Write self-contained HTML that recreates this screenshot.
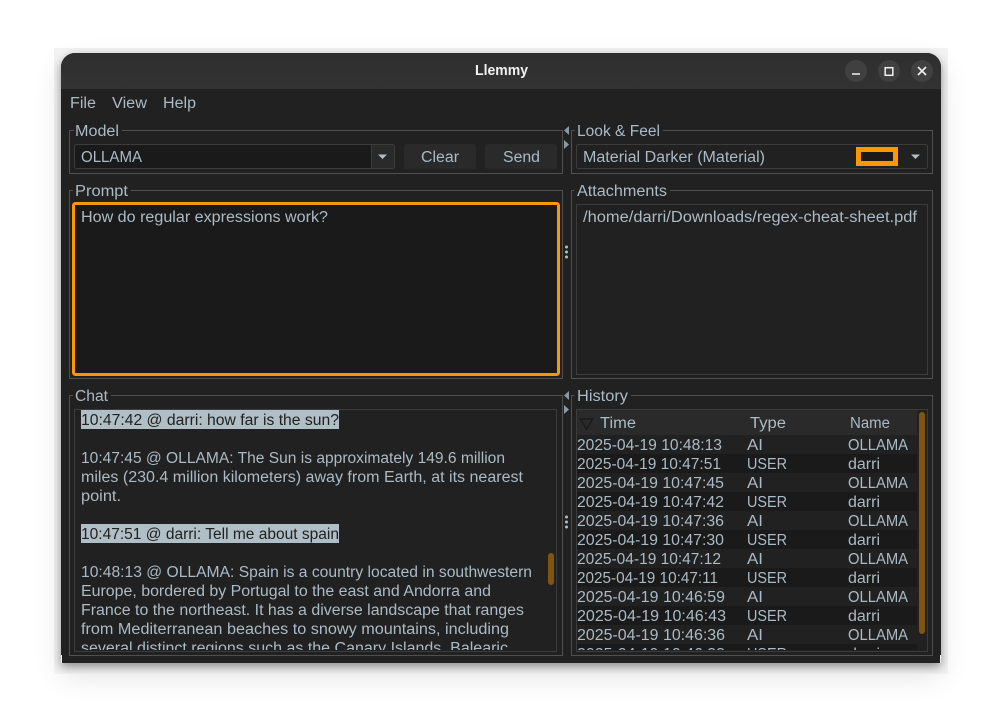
<!DOCTYPE html>
<html><head><meta charset="utf-8"><title>Llemmy</title>
<style>
html,body{margin:0;padding:0;background:#fff;width:1002px;height:722px;overflow:hidden}
#far{position:absolute;left:61px;top:53px;width:880px;height:610px;border-radius:14px 14px 0 0;box-shadow:0 12px 30px rgba(0,0,0,.12)}
#clip{position:absolute;left:54px;top:48px;width:894px;height:626px;overflow:hidden;background:#f2f2f2}
#win{position:absolute;left:7px;top:5px;width:880px;height:610px;border-radius:14px 14px 0 0;box-shadow:0 4px 10px rgba(0,0,0,.42)}
svg{position:absolute;left:0;top:0}
text{font-family:"Liberation Sans",sans-serif;font-size:15.5px;fill:#aabbc6}
</style></head><body>
<div id="far"></div>
<div id="clip"><div id="win"></div></div>
<svg width="1002" height="722" viewBox="0 0 1002 722" xmlns="http://www.w3.org/2000/svg">
<defs>
<linearGradient id="tb" x1="0" y1="0" x2="0" y2="1"><stop offset="0" stop-color="#2e2e2e"/><stop offset="1" stop-color="#333"/></linearGradient>
<clipPath id="cc"><rect x="75" y="410" width="481" height="240"/></clipPath>
<clipPath id="hc"><rect x="577" y="410" width="340" height="240"/></clipPath>
</defs>
<!-- window -->
<path d="M61 655V67a14 14 0 0 1 14-14H927a14 14 0 0 1 14 14V655H940V663H62V655Z" fill="#212121"/>
<path d="M61 89V67a14 14 0 0 1 14-14H927a14 14 0 0 1 14 14V89Z" fill="url(#tb)"/>
<text x="475" y="75" textLength="53" lengthAdjust="spacingAndGlyphs" style="font-weight:700;fill:#f2f2f2;font-size:14.5px">Llemmy</text>
<circle cx="856" cy="71" r="11" fill="#404040"/><circle cx="889" cy="71" r="11" fill="#404040"/><circle cx="922" cy="71" r="11" fill="#404040"/>
<path d="M852 74H860" stroke="#f0f0f0" stroke-width="1.5"/>
<rect x="885.2" y="67.7" width="7.6" height="7.6" fill="none" stroke="#f0f0f0" stroke-width="1.5"/>
<path d="M918 67L926 75M926 67L918 75" stroke="#f0f0f0" stroke-width="1.6"/>
<!-- menu -->
<text x="70" y="108" textLength="26" lengthAdjust="spacingAndGlyphs">File</text><text x="112" y="108" textLength="35" lengthAdjust="spacingAndGlyphs">View</text><text x="163" y="108" textLength="33" lengthAdjust="spacingAndGlyphs">Help</text>
<!-- group borders -->
<g fill="none" stroke="#505050">
<path d="M74 130.5H69.5V173.5H562.5V130.5H122"/>
<path d="M574.5 130.5H571.5V173.5H932.5V130.5H663"/>
<path d="M73 190.5H69.5V378.5H562.5V190.5H131"/>
<path d="M574.5 190.5H571.5V378.5H932.5V190.5H670"/>
<path d="M73 395.5H69.5V655.5H562.5V395.5H111"/>
<path d="M574.5 395.5H571.5V655.5H932.5V395.5H631"/>
</g>
<text x="75" y="136" textLength="44" lengthAdjust="spacingAndGlyphs">Model</text>
<text x="577" y="136" textLength="83" lengthAdjust="spacingAndGlyphs">Look &amp; Feel</text>
<text x="75" y="196" textLength="53" lengthAdjust="spacingAndGlyphs">Prompt</text>
<text x="577" y="196" textLength="90" lengthAdjust="spacingAndGlyphs">Attachments</text>
<text x="75" y="401" textLength="33" lengthAdjust="spacingAndGlyphs">Chat</text>
<text x="577" y="401" textLength="51" lengthAdjust="spacingAndGlyphs">History</text>
<!-- model combo -->
<rect x="74.5" y="144.5" width="320" height="24" rx="2" fill="#1a1a1a" stroke="#3c3c3c"/>
<rect x="372" y="145" width="22" height="23" fill="#2a2a2a"/><path d="M371.5 145V168" stroke="#3c3c3c"/>
<path d="M378 154.5H387L382.5 159Z" fill="#b0bec5"/>
<text x="81" y="162" textLength="61" lengthAdjust="spacingAndGlyphs">OLLAMA</text>
<rect x="404" y="144" width="72" height="25" rx="3" fill="#2a2a2a"/>
<rect x="485" y="144" width="72" height="25" rx="3" fill="#2a2a2a"/>
<text x="421" y="162" textLength="38" lengthAdjust="spacingAndGlyphs">Clear</text><text x="503" y="162" textLength="37" lengthAdjust="spacingAndGlyphs">Send</text>
<!-- laf combo -->
<rect x="576.5" y="144.5" width="351" height="24" rx="2" fill="#212121" stroke="#3c3c3c"/>
<text x="583" y="162" textLength="182" lengthAdjust="spacingAndGlyphs">Material Darker (Material)</text>
<rect x="858.5" y="149.5" width="37" height="14" fill="#1a1a1a" stroke="#ff9800" stroke-width="5"/>
<path d="M911 154.5H920L915.5 159Z" fill="#b0bec5"/>
<!-- prompt -->
<rect x="73.5" y="203.5" width="485" height="171" rx="2" fill="#1a1a1a" stroke="#ff9800" stroke-width="3"/>
<text x="81" y="222" textLength="247" lengthAdjust="spacingAndGlyphs">How do regular expressions work?</text>
<!-- attachments -->
<rect x="576.5" y="204.5" width="351" height="170" fill="#212121" stroke="#3c3c3c"/>
<text x="583" y="222" textLength="334" lengthAdjust="spacingAndGlyphs">/home/darri/Downloads/regex-cheat-sheet.pdf</text>
<!-- chat -->
<rect x="74.5" y="409.5" width="482" height="242" fill="#212121" stroke="#3c3c3c"/>
<rect x="81" y="410" width="258" height="19" fill="#b0bec5"/>
<rect x="81" y="524" width="258" height="19" fill="#b0bec5"/>
<g clip-path="url(#cc)">
<text x="81" y="425" textLength="258" lengthAdjust="spacingAndGlyphs" style="fill:#212121">10:47:42 @ darri: how far is the sun?</text>
<text x="81" y="463" textLength="424" lengthAdjust="spacingAndGlyphs">10:47:45 @ OLLAMA: The Sun is approximately 149.6 million</text>
<text x="81" y="482" textLength="442" lengthAdjust="spacingAndGlyphs">miles (230.4 million kilometers) away from Earth, at its nearest</text>
<text x="81" y="501" textLength="40" lengthAdjust="spacingAndGlyphs">point.</text>
<text x="81" y="539" textLength="258" lengthAdjust="spacingAndGlyphs" style="fill:#212121">10:47:51 @ darri: Tell me about spain</text>
<text x="81" y="577" textLength="451" lengthAdjust="spacingAndGlyphs">10:48:13 @ OLLAMA: Spain is a country located in southwestern</text>
<text x="81" y="596" textLength="410" lengthAdjust="spacingAndGlyphs">Europe, bordered by Portugal to the east and Andorra and</text>
<text x="81" y="615" textLength="443" lengthAdjust="spacingAndGlyphs">France to the northeast. It has a diverse landscape that ranges</text>
<text x="81" y="634" textLength="428" lengthAdjust="spacingAndGlyphs">from Mediterranean beaches to snowy mountains, including</text>
<text x="81" y="653" textLength="427" lengthAdjust="spacingAndGlyphs">several distinct regions such as the Canary Islands, Balearic</text>
</g>
<rect x="548" y="553" width="6" height="32" rx="3" fill="#7f5510"/>
<!-- history -->
<rect x="576.5" y="409.5" width="351" height="242" fill="#212121" stroke="#3c3c3c"/>
<rect x="577" y="410" width="340" height="25" fill="#2a2a2a"/>
<path d="M580.5 419H592.5L586.5 429.5Z" fill="none" stroke="#171717" stroke-width="1.2"/>
<text x="600" y="428" textLength="36" lengthAdjust="spacingAndGlyphs">Time</text><text x="750" y="428" textLength="36" lengthAdjust="spacingAndGlyphs">Type</text><text x="850" y="428" textLength="40" lengthAdjust="spacingAndGlyphs">Name</text>
<g fill="#1a1a1a">
<rect x="577" y="454" width="340" height="19"/><rect x="577" y="492" width="340" height="19"/><rect x="577" y="530" width="340" height="19"/><rect x="577" y="568" width="340" height="19"/><rect x="577" y="606" width="340" height="19"/><rect x="577" y="644" width="340" height="6"/>
</g>
<g clip-path="url(#hc)">
<text x="577" y="450" textLength="145" lengthAdjust="spacingAndGlyphs">2025-04-19 10:48:13</text><text x="747" y="450" textLength="16" lengthAdjust="spacingAndGlyphs">AI</text><text x="848" y="450" textLength="60" lengthAdjust="spacingAndGlyphs">OLLAMA</text>
<text x="577" y="469" textLength="144" lengthAdjust="spacingAndGlyphs">2025-04-19 10:47:51</text><text x="747" y="469" textLength="40" lengthAdjust="spacingAndGlyphs">USER</text><text x="848" y="469" textLength="32" lengthAdjust="spacingAndGlyphs">darri</text>
<text x="577" y="488" textLength="147" lengthAdjust="spacingAndGlyphs">2025-04-19 10:47:45</text><text x="747" y="488" textLength="16" lengthAdjust="spacingAndGlyphs">AI</text><text x="848" y="488" textLength="60" lengthAdjust="spacingAndGlyphs">OLLAMA</text>
<text x="577" y="507" textLength="147" lengthAdjust="spacingAndGlyphs">2025-04-19 10:47:42</text><text x="747" y="507" textLength="40" lengthAdjust="spacingAndGlyphs">USER</text><text x="848" y="507" textLength="32" lengthAdjust="spacingAndGlyphs">darri</text>
<text x="577" y="526" textLength="147" lengthAdjust="spacingAndGlyphs">2025-04-19 10:47:36</text><text x="747" y="526" textLength="16" lengthAdjust="spacingAndGlyphs">AI</text><text x="848" y="526" textLength="60" lengthAdjust="spacingAndGlyphs">OLLAMA</text>
<text x="577" y="545" textLength="147" lengthAdjust="spacingAndGlyphs">2025-04-19 10:47:30</text><text x="747" y="545" textLength="40" lengthAdjust="spacingAndGlyphs">USER</text><text x="848" y="545" textLength="32" lengthAdjust="spacingAndGlyphs">darri</text>
<text x="577" y="564" textLength="144" lengthAdjust="spacingAndGlyphs">2025-04-19 10:47:12</text><text x="747" y="564" textLength="16" lengthAdjust="spacingAndGlyphs">AI</text><text x="848" y="564" textLength="60" lengthAdjust="spacingAndGlyphs">OLLAMA</text>
<text x="577" y="583" textLength="141" lengthAdjust="spacingAndGlyphs">2025-04-19 10:47:11</text><text x="747" y="583" textLength="40" lengthAdjust="spacingAndGlyphs">USER</text><text x="848" y="583" textLength="32" lengthAdjust="spacingAndGlyphs">darri</text>
<text x="577" y="602" textLength="148" lengthAdjust="spacingAndGlyphs">2025-04-19 10:46:59</text><text x="747" y="602" textLength="16" lengthAdjust="spacingAndGlyphs">AI</text><text x="848" y="602" textLength="60" lengthAdjust="spacingAndGlyphs">OLLAMA</text>
<text x="577" y="621" textLength="149" lengthAdjust="spacingAndGlyphs">2025-04-19 10:46:43</text><text x="747" y="621" textLength="40" lengthAdjust="spacingAndGlyphs">USER</text><text x="848" y="621" textLength="32" lengthAdjust="spacingAndGlyphs">darri</text>
<text x="577" y="640" textLength="148" lengthAdjust="spacingAndGlyphs">2025-04-19 10:46:36</text><text x="747" y="640" textLength="16" lengthAdjust="spacingAndGlyphs">AI</text><text x="848" y="640" textLength="60" lengthAdjust="spacingAndGlyphs">OLLAMA</text>
<text x="577" y="659" textLength="148" lengthAdjust="spacingAndGlyphs">2025-04-19 10:46:33</text><text x="747" y="659" textLength="40" lengthAdjust="spacingAndGlyphs">USER</text><text x="848" y="659" textLength="32" lengthAdjust="spacingAndGlyphs">darri</text>
</g>
<rect x="919" y="412" width="6" height="222" rx="3" fill="#7f5510"/>
<!-- splitters -->
<g fill="#8a9aa3">
<path d="M569 126V135L564 130.5Z"/><path d="M564 140V149L569 144.5Z"/>
<path d="M569 391V400L564 395.5Z"/><path d="M564 405V414L569 409.5Z"/>
</g>
<g fill="#b0bec5">
<circle cx="566.5" cy="247" r="1.5"/><circle cx="566.5" cy="252" r="1.5"/><circle cx="566.5" cy="257" r="1.5"/>
<circle cx="566.5" cy="517" r="1.5"/><circle cx="566.5" cy="522" r="1.5"/><circle cx="566.5" cy="527" r="1.5"/>
</g>
</svg>
</body></html>
